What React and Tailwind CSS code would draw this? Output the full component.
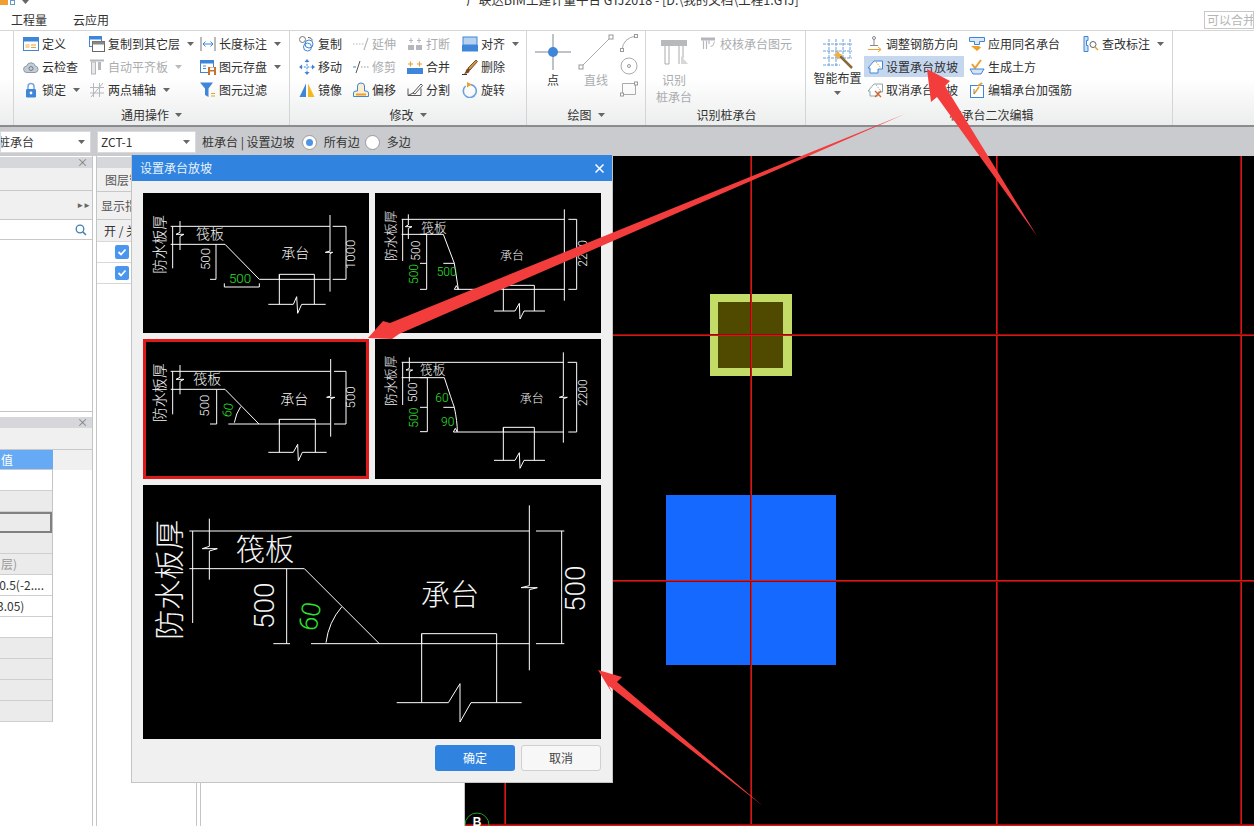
import React from "react";

const FONT = { fontFamily: '"Noto Sans CJK SC", "Noto Sans", sans-serif' };
const B = "#3f86d8";
const O = "#eba12c";
const G = "#b4b8bc";

const I = ({ children, s = 16 }) => (
  <svg width={s} height={s} viewBox="0 0 16 16" fill="none" className="shrink-0">{children}</svg>
);

const icons = {
  define: <I><rect x="0.5" y="1.5" width="15" height="13" fill="#fff" stroke={B} /><rect x="0.5" y="1.5" width="15" height="4" fill={B} /><rect x="2.5" y="8" width="4" height="4" fill="#f6d79c" /><path d="M8 9h5M8 11.5h5" stroke={O} /></I>,
  cloud: <I><path d="M4 13.5a3.2 3.2 0 0 1-.4-6.4A4.6 4.6 0 0 1 12.4 7a3.3 3.3 0 0 1-.2 6.5z" fill="#c3ccd5" stroke="#8d9aa8" /><circle cx="8" cy="9.5" r="2" stroke="#6d7d8e" /></I>,
  lock: <I><path d="M5 7V4.5a3 3 0 0 1 6 0V7" stroke="#7aa6d8" strokeWidth="1.5" /><rect x="3" y="7" width="10" height="8.5" rx="1.2" fill={B} /><circle cx="8" cy="11" r="1.4" fill="#fff" /></I>,
  copyLayer: <I><rect x="0.5" y="0.5" width="12" height="10" fill="#fff" stroke={B} /><rect x="0.5" y="0.5" width="12" height="3" fill={B} /><rect x="3.5" y="5.5" width="12" height="10" fill="#fff" stroke="#666" /><rect x="3.5" y="5.5" width="12" height="3" fill="#888" /></I>,
  autoAlign: <I><path d="M1 1.5h14" stroke={G} strokeWidth="2" /><rect x="2.5" y="3" width="4" height="12" stroke={G} fill="#e8e8e8" /><rect x="9" y="3" width="3" height="8" fill={G} /></I>,
  axis: <I><path d="M1 5.5h14M1 11h14M4.5 1v14M10.5 1v14M2 15L14 1" stroke={G} /></I>,
  length: <I><path d="M1 1v14M15 1v14" stroke="#777" /><path d="M3 8h10" stroke={B} /><path d="M5.5 5.5L3 8l2.5 2.5M10.5 5.5L13 8l-2.5 2.5" stroke={B} /></I>,
  save: <I><rect x="0.5" y="1.5" width="13" height="12" fill="#fff" stroke={B} /><rect x="0.5" y="1.5" width="13" height="3" fill={B} /><path d="M3 7h3M3 9.5h3" stroke={B} /><rect x="8" y="8" width="8" height="8" fill="#c9722c" /><rect x="10" y="8.5" width="4" height="2.5" fill="#fff" /><rect x="10" y="12.5" width="4" height="3.5" fill="#fff" /></I>,
  filter: <I><path d="M0 0.5h13L8.5 6.5V15L5 13V6.5z" fill={B} /><path d="M11 11.5h4M11 14h4" stroke={O} /></I>,
  copy: <I><circle cx="3.5" cy="3.5" r="3" stroke="#777" fill="#fff" /><circle cx="10" cy="8" r="4" stroke={B} /><circle cx="8.5" cy="11" r="4" stroke={B} /><path d="M9 1.5c2.5 0 4 1.2 4.2 3" stroke="#555" /></I>,
  extend: <I><path d="M0 8h1.5M3 8h1.5M6 8h1.5M9 8h1.5" stroke={G} /><path d="M11 14L15 2" stroke={G} strokeWidth="1.2" /></I>,
  breakI: <I><rect x="1" y="9" width="6" height="5" fill={G} /><rect x="9" y="9" width="6" height="5" fill={G} /><path d="M4 2v5M2 4.5h4M12 2v5M10 4.5h4" stroke={G} /></I>,
  align: <I><rect x="1" y="1" width="14" height="8" fill="#b7d2ee" stroke={B} /><rect x="0" y="9" width="16" height="6.5" fill={B} /></I>,
  move: <I><path d="M8 1.5v13M1.5 8h13" stroke={B} strokeDasharray="2 1.4" /><path d="M8 0l2.5 3h-5zM8 16l-2.5-3h5zM0 8l3-2.5v5zM16 8l-3 2.5v-5z" fill={B} /></I>,
  trim: <I><path d="M3 14L7 2" stroke="#555" /><path d="M0 8h3" stroke={B} /><path d="M8 8h1.5M11 8h1.5M14 8h1.5" stroke="#999" /></I>,
  merge: <I><rect x="0" y="9" width="16" height="6" fill={B} /><path d="M3.5 2.5v5M1 5h5M12.5 2.5v5M10 5h5" stroke={O} strokeWidth="1.2" /></I>,
  mirror: <I><path d="M7 1.5V15H0.5z" fill={B} /><path d="M9 1.5V15h6.5z" fill="#f3b81c" /></I>,
  offset: <I><path d="M0.5 14.5V11q0-2 2.5-2h1.5V4q0-3 3.5-3t3.5 3v5H13q2.5 0 2.5 2v3.5z" fill="#fbeed2" stroke={B} /><path d="M3 12.5h10" stroke={O} strokeWidth="2" /></I>,
  split: <I><path d="M1 6.5v7h13v-7" stroke="#555" /><path d="M1 13.5l6-3" stroke="#555" /><path d="M6 11L14 2l1.5 1.5L8 12z" fill="#fff" stroke="#555" /></I>,
  del: <I><path d="M6 9L14 1l1.5 1.5L8 11z" fill="#c99548" stroke="#76542a" /><path d="M6 9l2 2-1 2.5q-2 1.5-5 1q2-1 2-3.5z" fill="#7d4a22" /><path d="M0 15.5h5" stroke="#333" /></I>,
  rotate: <I><path d="M9 2.6A6.5 6.5 0 1 1 3.6 4" stroke="#6aa3de" strokeWidth="1.6" /><path d="M5 0l5 2.5L5 5.5z" fill={O} /></I>,
  checkGray: <I><rect x="0" y="1.5" width="14" height="3" fill={G} /><path d="M2.5 4.5V13M5.5 4.5V13M8 4.5V8" stroke={G} strokeWidth="1.2" /><path d="M9.5 10.5q3 .5 4-5" stroke={G} /></I>,
  adjust: <I><circle cx="7" cy="2" r="1.5" stroke="#888" /><path d="M7 3.5V9M3 9.5h8" stroke="#888" /><path d="M1 13.5h13" stroke={O} /><path d="M11 11l3 2.5-3 2.5" stroke={O} /></I>,
  slope: <I><path d="M1 9L7 2h8.5v8H11v4H3V9z" fill="#fff" stroke={B} /><path d="M9 3l5 6" stroke={O} strokeDasharray="1.5 1" /></I>,
  cancelSlope: <I><path d="M1 9L7 2h8.5v8H11v4H3V9z" fill="#fff" stroke="#8aa" /><path d="M9 3l5 6" stroke="#aaa" strokeDasharray="1.5 1" /><path d="M8 9l6 6M14 9l-6 6" stroke="#d8602c" strokeWidth="1.3" /></I>,
  applySame: <I><path d="M0.5 1.5h15v4h-5v3h-5v-3h-5z" fill="#dbe8f6" stroke={B} /><path d="M2 10h8l2 1.5L8 15z" fill={O} /></I>,
  earth: <I><path d="M3 5l3 4 6-8" stroke={O} strokeWidth="2" /><path d="M1 10h14l-3 5H4z" fill="#d5e3f2" stroke={B} /></I>,
  rebar: <I><rect x="1.5" y="3.5" width="13" height="12" fill="#fff" stroke={B} /><path d="M5 12l5-7" stroke={O} strokeWidth="1.5" /><path d="M9 4l4-3" stroke={O} strokeWidth="2" /><path d="M5 7v5" stroke="#888" /></I>,
  mark: <I><path d="M1 0.5h4v4H3.5v5H5v6H1z" fill="#cfe0f2" stroke={B} /><circle cx="10" cy="8.5" r="3" stroke="#666" /><path d="M12 11l3 3" stroke={O} strokeWidth="1.5" /></I>,
};

const Caret = ({ c = "#666" }) => (
  <svg width="7" height="4" viewBox="0 0 7 4" className="shrink-0"><path d="M0 0h7L3.5 4z" fill={c} /></svg>
);

const Item = ({ icon, label, caret, off, hi }) => (
  <div className={`h-[23px] flex items-center gap-[3px] whitespace-nowrap ${off ? "text-[#a9acaf]" : "text-[#2f2f2f]"}`}>
    {hi ? (
      <span className="flex items-center gap-[3px] bg-[#c5d7ee] h-[21px] -ml-[3px] pl-[3px] w-[100px]">{icons[icon]}{label}</span>
    ) : (
      <>{icons[icon]}{label}{caret && <span className="ml-[4px] flex"><Caret c={off ? "#bbb" : "#666"} /></span>}</>
    )}
  </div>
);

const Group = ({ w, label, caret, children, labelOffset = "" }) => (
  <div className={`${w} shrink-0 flex flex-col border-r border-[#d3d5d7]`}>
    <div className="h-[74px] pt-[1px] flex">{children}</div>
    <div className={`h-[20px] flex items-center justify-center gap-[6px] text-[#333] ${labelOffset}`}>
      {label}{caret && <Caret />}
    </div>
  </div>
);

const Col = ({ w, items }) => (
  <div className={`${w} shrink-0 flex flex-col`}>
    {items.map((p) => <Item key={p.label} {...p} />)}
  </div>
);

const Radio = ({ on }) => (
  <span className="w-[15px] h-[15px] rounded-full bg-white border border-[#9a9a9a] flex items-center justify-center">
    {on && <span className="w-[7px] h-[7px] rounded-full bg-[#4f93e6]" />}
  </span>
);

const Select = ({ w, text, clip }) => (
  <div className={`${w} h-[22px] bg-white flex items-center justify-between pr-[5px] overflow-hidden text-[#333] border border-[#d8dadc]`}>
    <span className={clip ? "-ml-[3px]" : "pl-[3px]"}>{text}</span>
    <Caret />
  </div>
);

const PanelHead = () => (
  <div className="h-[11px] bg-[#d5d7da] flex items-center justify-end pr-[4px]">
    <span className="text-[#777] text-[11px] leading-none">×</span>
  </div>
);

const Check = () => (
  <svg width="14" height="14" viewBox="0 0 14 14"><rect width="14" height="14" rx="2" fill="#4a96ee" /><path d="M3.5 7l2.5 2.5 4.5-5" stroke="#fff" strokeWidth="1.8" fill="none" /></svg>
);

const NUM = 'Roboto, "Liberation Sans", sans-serif';
const GREEN = "#2fe02f";

const T = ({ x, y, s = 38, c = "#f4f4f4", r, children, f = '"Noto Sans CJK SC", sans-serif' }) => (
  <text x={x} y={y} fontSize={s} fill={c} fontFamily={f} textAnchor="middle" dominantBaseline="central" fontWeight="300"
    transform={r !== undefined ? `rotate(${r} ${x} ${y})` : undefined}>{children}</text>
);

const Path = ({ d, w = 3, c = "#fff" }) => <path d={d} stroke={c} strokeWidth={w} fill="none" />;

const Thumb1 = () => (
  <svg viewBox="39 114 678 420" width="226" height="140" className="block bg-black">
    <Path d="M122 214H600M150 198V232L138 238H162L150 244V285M128 214V340M122 268H285L388 373H600M600 180V288L586 292H608L600 296V410M608 214H648V373H608M258 268V373H240M448 373V358H553V448M448 358V448M415 448H490L500 425L503 475L515 448H587" />
    <Path d="M283 385V396H388V385" />
    <T x={86} y={268} s={44} r={-90}>防水板厚</T>
    <T x={240} y={235} s={42}>筏板</T>
    <T x={496} y={290} s={42}>承台</T>
    <T x={225} y={312} s={40} r={-90} f={NUM}>500</T>
    <T x={663} y={298} s={40} r={-90} f={NUM}>1000</T>
    <T x={330} y={369} s={40} c={GREEN} f={NUM}>500</T>
  </svg>
);

const Thumb2 = () => (
  <svg viewBox="735 114 678 420" width="226" height="140" className="block bg-black">
    <Path d="M815 193H1303M835 178V210L826 215H846L835 220V252M818 193V318M815 238H940L973 325L985 403M940 325H973M973 403H1303M973 403L979 392L985 403M890 238V403M870 238H890M870 325H890M870 403H890M1303 163V437M1315 193H1340V403H1315M1120 403V391H1213V468M1120 391V468M1092 468H1155L1168 445L1170 492L1182 468H1245" />
    <T x={780} y={242} s={38} r={-90}>防水板厚</T>
    <T x={912} y={214} s={38}>筏板</T>
    <T x={1146} y={298} s={36}>承台</T>
    <T x={857} y={287} s={36} r={-90} f={NUM}>500</T>
    <T x={853} y={357} s={36} r={-90} c={GREEN} f={NUM}>500</T>
    <T x={950} y={352} s={36} c={GREEN} f={NUM}>500</T>
    <T x={1360} y={295} s={36} r={-90} f={NUM}>2200</T>
  </svg>
);

const Thumb3 = () => (
  <div className="relative">
    <svg viewBox="39 552 678 420" width="226" height="140" className="block bg-black">
      <Path d="M122 649H602M150 630V667L138 673H162L150 679V718M128 649V778M122 703H285L387 807M295 807H602M260 703V807H240M313 803Q318 775 332 755M602 612V723L590 727H615L602 731V845M612 649H648V807H612M448 807V793H556V892M448 793V892M415 892H490L503 868L505 918L517 892H590" />
      <T x={86} y={713} s={44} r={-90}>防水板厚</T>
      <T x={232} y={670} s={42}>筏板</T>
      <T x={493} y={730} s={42}>承台</T>
      <T x={225} y={752} s={40} r={-90} f={NUM}>500</T>
      <T x={293} y={765} s={38} r={-78} c={GREEN} f={NUM}>60</T>
      <T x={663} y={727} s={40} r={-90} f={NUM}>500</T>
    </svg>
    <div className="absolute inset-0 border-[3px] border-[#dd1a1a]" />
  </div>
);

const Thumb4 = () => (
  <svg viewBox="735 552 678 420" width="226" height="140" className="block bg-black">
    <Path d="M815 622H1300M838 607V640L828 645H848L838 650V680M818 622V750M815 668H943Q965 735 973 757Q982 800 982 830M940 757H973M970 831H1300M970 831L976 820L982 831M892 668V830M870 668H892M870 757H892M870 830H892M1300 592V723L1288 727H1312L1300 731V863M1313 622H1340V831H1315M1120 831V817H1213V916M1120 817V916M1092 916H1155L1168 893L1170 940L1182 916H1245" />
    <T x={780} y={677} s={38} r={-90}>防水板厚</T>
    <T x={908} y={641} s={38}>筏板</T>
    <T x={1205} y={727} s={36}>承台</T>
    <T x={850} y={712} s={36} r={-90} f={NUM}>500</T>
    <T x={853} y={788} s={36} r={-90} c={GREEN} f={NUM}>500</T>
    <T x={936} y={728} s={36} c={GREEN} f={NUM}>60</T>
    <T x={953} y={800} s={36} c={GREEN} f={NUM}>90</T>
    <T x={1360} y={713} s={36} r={-90} f={NUM}>2200</T>
  </svg>
);

const Large = () => (
  <svg viewBox="39 14 1374 762" width="458" height="254" className="block bg-black">
    <Path d="M178 152H1198M238 115V198L217 205H262L238 212V298M188 152V428M178 265H523L748 490M543 490H1198M470 265V490M430 490H480M588 487Q596 425 635 380M1198 75V316L1173 322H1222L1198 328V570M1218 152H1303M1295 152V490M1218 490H1303M875 490V460H1100V667M875 460V667M800 667H955L990 610V725L1023 667H1175" />
    <T x={112} y={298} s={90} r={-90}>防水板厚</T>
    <T x={405} y={200} s={88}>筏板</T>
    <T x={960} y={335} s={88}>承台</T>
    <T x={405} y={376} s={84} r={-90} f={NUM}>500</T>
    <T x={540} y={408} s={78} r={-80} c={GREEN} f={NUM}>60</T>
    <T x={1337} y={325} s={84} r={-90} f={NUM}>500</T>
  </svg>
);

const RED = "#dc1414";
const RED_DIM = "#8a0e0e";
const Canvas = () => (
  <svg viewBox="465 156 789 670" width="789" height="670" className="block">
    <rect x="465" y="156" width="789" height="670" fill="#000" />
    <rect x="710" y="294" width="82" height="82" fill="#c3dc68" />
    <rect x="718" y="302" width="65" height="66" fill="#4f4a00" />
    <rect x="666" y="495" width="170" height="170" fill="#1569ff" />
    {[[505, 504], [751, 750], [996, 997], [1241, 1240]].map(([x, d]) => (
      <g key={x}>
        <rect x={d} y="156" width="1" height="670" fill={RED_DIM} />
        <rect x={x} y="156" width="1" height="670" fill={RED} />
      </g>
    ))}
    {[[335, 334], [580, 581], [825, 824]].map(([y, d]) => (
      <g key={y}>
        <rect x="465" y={d} width="789" height="1" fill={RED_DIM} />
        <rect x="465" y={y} width="789" height="1" fill={RED} />
      </g>
    ))}
    <circle cx="477" cy="825" r="12" stroke="#1fa01f" fill="none" />
    <text x="477" y="826" fill="#fff" fontSize="12" fontWeight="700" textAnchor="middle" fontFamily='"Liberation Sans", sans-serif'>B</text>
  </svg>
);

const Arrows = () => (
  <svg width="1254" height="826" viewBox="0 0 1254 826" className="absolute inset-0 pointer-events-none">
    <g fill="#f33d3d">
      <path d="M368 338L383 321L390 323L905 114L399 334L392 339Z" />
      <path d="M927 69L950 81L945 86L1037 236L937 97L931 102Z" />
      <path d="M598 670L622 677L617 682L763 806L609 686L612 693Z" />
    </g>
  </svg>
);

function Row({ g, children }) {
  return (
    <div className={`h-[21px] shrink-0 border-b border-[#cfcfcf] flex items-center ${g ? "bg-[#ebebeb]" : "bg-white"}`}>{children}</div>
  );
}

export default function App() {
  return (
    <div style={FONT} className="relative w-[1254px] h-[826px] overflow-hidden bg-white text-[12px] leading-none flex flex-col">
      {/* title */}
      <div className="h-[10px] relative overflow-hidden shrink-0">
        <div className="absolute left-0 top-0 w-[8px] h-[5px] bg-[#f0a030]" />
        <div className="absolute left-[10px] top-0 w-[5px] h-[5px] border border-[#6a96c8]" />
        <div className="absolute left-[22px] top-0"><Caret /></div>
        <div className="text-center text-[12.5px] text-[#333] -mt-[7px] pl-[11px] leading-[14px] whitespace-nowrap">广联达BIM土建计量平台 GTJ2018 - [D:\我的文档\工程1.GTJ]</div>
      </div>

      {/* tabs */}
      <div className="h-[20px] shrink-0 flex items-center pl-[11px] gap-[26px] text-[#333] relative">
        <span>工程量</span>
        <span>云应用</span>
        <div className="absolute right-0 top-[1px] w-[50px] h-[18px] border border-[#c8c8c8] text-[#b5b5b5] pl-[2px] flex items-center overflow-hidden whitespace-nowrap">可以合并不</div>
      </div>

      {/* ribbon */}
      <div className="h-[97px] shrink-0 flex border-t border-[#d6d6d6] border-b-2 border-b-[#8a8c8e] bg-gradient-to-b from-white via-white to-[#eceded]">
        <div className="w-[14px] shrink-0 border-r border-[#d3d5d7]" />
        <Group w="w-[276px]" label="通用操作" caret>
          <div className="w-[9px]" />
          <Col w="w-[66px]" items={[{ icon: "define", label: "定义" }, { icon: "cloud", label: "云检查" }, { icon: "lock", label: "锁定", caret: true }]} />
          <Col w="w-[111px]" items={[{ icon: "copyLayer", label: "复制到其它层", caret: true }, { icon: "autoAlign", label: "自动平齐板", caret: true, off: true }, { icon: "axis", label: "两点辅轴", caret: true }]} />
          <Col w="w-[88px]" items={[{ icon: "length", label: "长度标注", caret: true }, { icon: "save", label: "图元存盘", caret: true }, { icon: "filter", label: "图元过滤" }]} />
        </Group>
        <Group w="w-[237px]" label="修改" caret>
          <div className="w-[9px]" />
          <Col w="w-[54px]" items={[{ icon: "copy", label: "复制" }, { icon: "move", label: "移动" }, { icon: "mirror", label: "镜像" }]} />
          <Col w="w-[54px]" items={[{ icon: "extend", label: "延伸", off: true }, { icon: "trim", label: "修剪", off: true }, { icon: "offset", label: "偏移" }]} />
          <Col w="w-[55px]" items={[{ icon: "breakI", label: "打断", off: true }, { icon: "merge", label: "合并" }, { icon: "split", label: "分割" }]} />
          <Col w="w-[60px]" items={[{ icon: "align", label: "对齐", caret: true }, { icon: "del", label: "删除" }, { icon: "rotate", label: "旋转" }]} />
        </Group>
        <Group w="w-[119px]" label="绘图" caret>
          <div className="w-[7px]" />
          <div className="w-[38px] flex flex-col items-center pt-[2px]">
            <svg width="36" height="36" viewBox="0 0 36 36">
              <path d="M18 0V36M0 18H36" stroke="#7d8791" />
              <circle cx="18" cy="18" r="5" fill="#3f86d8" />
            </svg>
            <span className="mt-[4px] text-[#333]">点</span>
          </div>
          <div className="ml-[5px] w-[38px] flex flex-col items-center pt-[2px]">
            <svg width="36" height="36" viewBox="0 0 36 36">
              <path d="M3 33L33 3" stroke="#aaa" />
              <rect x="1" y="31" width="4" height="4" fill="#fff" stroke="#999" />
              <rect x="31" y="1" width="4" height="4" fill="#fff" stroke="#999" />
            </svg>
            <span className="mt-[4px] text-[#a9acaf]">直线</span>
          </div>
          <div className="ml-[5px] flex flex-col gap-[5px] pt-[2px]">
            <svg width="18" height="18" viewBox="0 0 18 18"><path d="M2 16Q3 4 16 2" stroke="#aaa" fill="none" /><rect x="0.5" y="14.5" width="3" height="3" fill="#fff" stroke="#999" /><rect x="14.5" y="0.5" width="3" height="3" fill="#fff" stroke="#999" /></svg>
            <svg width="18" height="18" viewBox="0 0 18 18"><circle cx="9" cy="9" r="8" stroke="#aaa" fill="none" /><circle cx="9" cy="9" r="1.5" stroke="#999" fill="none" /></svg>
            <svg width="18" height="18" viewBox="0 0 18 18"><path d="M2.5 3.5H15.5V14.5H2.5Z" stroke="#aaa" fill="none" /><rect x="0.5" y="13" width="3" height="3" fill="#fff" stroke="#999" /><rect x="14.5" y="2" width="3" height="3" fill="#fff" stroke="#999" /></svg>
          </div>
        </Group>
        <Group w="w-[160px]" label="识别桩承台" labelOffset="pl-[2px]">
          <div className="w-[8px]" />
          <div className="w-[40px] flex flex-col items-center text-[#a9acaf] pt-[4px]">
            <svg width="30" height="32" viewBox="0 0 30 32">
              <rect x="2" y="4" width="26" height="6" fill="#b7babd" />
              <path d="M6 10V28M10 10V28M6 28H10M20 10V28M24 10V22" stroke="#aaa" />
              <path d="M22 20L29 28H22Z" fill="#d5d7d9" />
            </svg>
            <span className="mt-[6px]">识别</span>
            <span className="mt-[5px]">桩承台</span>
          </div>
          <div className="ml-[7px] flex-1"><Item icon="checkGray" label="校核承台图元" off /></div>
        </Group>
        <Group w="w-[367px]" label="桩承台二次编辑" labelOffset="pl-[5px]">
          <div className="w-[2px]" />
          <div className="w-[59px] flex flex-col items-center text-[#333] pt-[6px]">
            <svg width="32" height="32" viewBox="0 0 32 32">
              <path d="M1 6H30M1 13H30M1 20H30M1 27H18M7 1V28M14 1V28M21 1V20M28 1V20" stroke="#68a0d8" strokeDasharray="3 1" />
              <path d="M18 18L30 30" stroke="#8a6a3a" strokeWidth="2.5" />
              <path d="M16 12l1.5 3.5 3.5 1.5-3.5 1.5-1.5 3.5-1.5-3.5-3.5-1.5 3.5-1.5z" fill="#f0b040" />
            </svg>
            <span className="mt-[2px] whitespace-nowrap">智能布置</span>
            <span className="mt-[7px]"><Caret /></span>
          </div>
          <Col w="w-[102px]" items={[{ icon: "adjust", label: "调整钢筋方向" }, { icon: "slope", label: "设置承台放坡", hi: true }, { icon: "cancelSlope", label: "取消承台放坡" }]} />
          <Col w="w-[114px]" items={[{ icon: "applySame", label: "应用同名承台" }, { icon: "earth", label: "生成土方" }, { icon: "rebar", label: "编辑承台加强筋" }]} />
          <Col w="w-[85px]" items={[{ icon: "mark", label: "查改标注", caret: true }]} />
        </Group>
      </div>

      {/* options bar */}
      <div className="h-[29px] shrink-0 bg-[#c9cbce] flex items-center pt-[1px] text-[#333]">
        <Select w="w-[91px]" text="桩承台" clip />
        <div className="w-[6px]" />
        <Select w="w-[99px]" text="ZCT-1" />
        <span className="ml-[6px]">桩承台 | 设置边坡</span>
        <span className="ml-[7px]"><Radio on /></span>
        <span className="ml-[7px]">所有边</span>
        <span className="ml-[5px]"><Radio /></span>
        <span className="ml-[7px]">多边</span>
      </div>

      {/* main */}
      <div className="flex-1 flex min-h-0 bg-white">
        <div className="w-[93px] shrink-0 border-r border-[#c2c4c6] flex flex-col pt-[1px]">
          <div className="h-[255px] border-b border-[#c2c4c6] flex flex-col">
            <PanelHead />
            <div className="h-[23px] bg-[#f0f0f0] border-b border-[#c8c8c8]" />
            <div className="h-[29px] bg-[#f0f0f0] border-b border-[#c8c8c8] flex items-center justify-end pr-[2px] text-[#666] text-[8px] tracking-[-1px]">►►</div>
            <div className="h-[20px] border-b border-[#c8c8c8] flex items-center justify-end pr-[5px]">
              <svg width="12" height="12" viewBox="0 0 12 12" fill="none"><circle cx="5" cy="5" r="3.8" stroke="#3d7fb0" strokeWidth="1.3" /><path d="M8 8l3 3" stroke="#3d7fb0" strokeWidth="1.5" /></svg>
            </div>
          </div>
          <div className="mt-[5px] flex flex-col flex-1">
            <PanelHead />
            <div className="h-[22px] bg-[#f0f0f0] border-b border-[#c8c8c8]" />
            <div className="w-[92px] h-[20px] bg-[#f0f0f0]">
              <div className="w-[53px] h-[20px] bg-[#66aaf5] text-white flex items-center pl-[1px] border-b border-[#c8c8c8]">值</div>
            </div>
            <div className="w-[53px] border-r border-[#c2c4c6] flex flex-col overflow-hidden whitespace-nowrap">
              <Row />
              <Row g />
              <div className="h-[21px] bg-[#ebebeb] border-2 border-l-0 border-[#808080]" />
              <Row g />
              <Row g><span className="text-[#999] ml-[1px]">层)</span></Row>
              <Row><span className="text-[#333] -ml-[5px]">-0.5(-2....</span></Row>
              <Row><span className="text-[#333] -ml-[3px]">3.05)</span></Row>
              <Row />
              <Row g />
              <Row g />
              <Row g />
              <Row g />
            </div>
          </div>
        </div>
        <div className="w-[3px] shrink-0" />
        <div className="w-[101px] shrink-0 border-x border-[#c2c4c6] flex flex-col pt-[1px] text-[#555] whitespace-nowrap overflow-hidden">
          <div className="h-[11px] bg-[#d5d7da]" />
          <div className="h-[23px] bg-[#f0f0f0] pl-[8px] flex items-center text-[#555]">图层管理</div>
          <div className="h-[29px] bg-[#f0f0f0] border-y border-[#c8c8c8] pl-[4px] flex items-center">显示指定图层</div>
          <div className="h-[21px] bg-[#f0f0f0] pl-[7px] flex items-center text-[#333]">开 / 关</div>
          <div className="h-[22px] border-y border-[#d8d8d8] pl-[18px] flex items-center"><Check /></div>
          <div className="h-[21px] border-b border-[#d8d8d8] pl-[18px] flex items-center"><Check /></div>
        </div>
        <div className="w-[3px] shrink-0" />
        <div className="w-[265px] shrink-0 border-x border-[#c2c4c6]" />
        <div className="flex-1 min-w-0 overflow-hidden"><Canvas /></div>
      </div>

      {/* dialog */}
      <div className="absolute left-[131px] top-[155px] w-[482px] h-[628px] bg-[#f0f0f0] border border-[#c4c4c4] border-t-0 flex flex-col">
        <div className="h-[26px] shrink-0 bg-[#3084e0] text-[#eaf3fd] flex items-center justify-between px-[8px]">
          <span>设置承台放坡</span>
          <svg width="9" height="9" viewBox="0 0 9 9"><path d="M.5.5l8 8M8.5.5l-8 8" stroke="#fff" strokeWidth="1.5" /></svg>
        </div>
        <div className="pl-[11px] pt-[12px]">
          <div className="grid grid-cols-[226px_226px] gap-[6px]">
            <Thumb1 />
            <Thumb2 />
            <Thumb3 />
            <Thumb4 />
            <div className="col-span-2"><Large /></div>
          </div>
          <div className="flex justify-end gap-[6px] w-[458px] mt-[6px]">
            <div className="w-[80px] h-[26px] rounded-[3px] bg-[#3084e0] text-white flex items-center justify-center">确定</div>
            <div className="w-[80px] h-[26px] rounded-[3px] bg-[#f7f7f7] border border-[#d0d0d0] text-[#444] flex items-center justify-center">取消</div>
          </div>
        </div>
      </div>

      <Arrows />
    </div>
  );
}
